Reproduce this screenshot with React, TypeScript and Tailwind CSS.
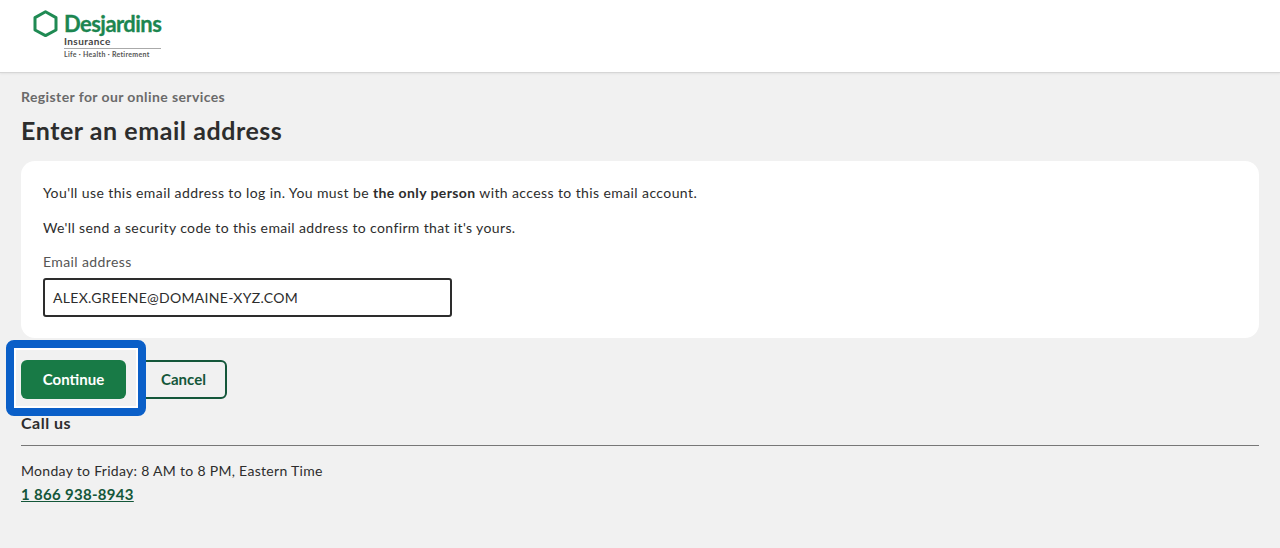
const font = { fontFamily: "Lato, 'Noto Sans', sans-serif" }

function Logo()
{
    return (
        <div className="flex items-start gap-[6px]">
            <svg width="25" height="28" viewBox="0 0 25 28" className="mt-[10px] shrink-0">
                <path d="M12.5 1.8 L23 7.6 V20 L12.5 25.6 L2 20 V7.6 Z" fill="none" stroke="#1f8a53" strokeWidth="3" strokeLinejoin="round" />
            </svg>
            <div className="mt-[11px] w-[97px]">
                <div className="text-[22px] leading-[26px] font-bold text-[#1c8650] tracking-[-0.55px] [-webkit-text-stroke:0.3px_#1c8650] whitespace-nowrap">Desjardins</div>
                <div className="-mt-[1px] text-[10px] leading-[11px] font-bold text-[#444] tracking-[0.4px]">Insurance</div>
                <div className="mt-[1px] border-t border-[#aaa] text-[7px] leading-[11px] font-bold text-[#555] tracking-[0.3px] whitespace-nowrap">Life · Health · Retirement</div>
            </div>
        </div>
    )
}

export default function App()
{
    return (
        <div className="relative h-[548px] w-[1280px] overflow-hidden bg-[#f1f1f1] text-[#2d2d2d]" style={ font }>
            <header className="h-[73px] border-b border-[#d6d6d6] bg-white pl-[33px] shadow-[0_1px_2px_rgba(0,0,0,0.06)]">
                <Logo />
            </header>
            <main className="px-[21px]">
                <p className="mt-[15px] text-[14px] leading-[17px] font-bold text-[#6a6a6a] tracking-[0.4px]">Register for our online services</p>
                <h1 className="mt-[9px] text-[25px] leading-[32px] font-bold text-[#2d2d2d] tracking-[0.55px]">Enter an email address</h1>
                <section className="mt-[15px] h-[177px] w-[1238px] rounded-[14px] bg-white px-[22px] pt-[23px] text-[14px] leading-[18px] tracking-[0.4px]">
                    <p>You'll use this email address to log in. You must be <b>the only person</b> with access to this email account.</p>
                    <p className="mt-[17px] tracking-[0.37px]">We'll send a security code to this email address to confirm that it's yours.</p>
                    <label className="mt-[16px] block text-[#555]">Email address</label>
                    <div className="mt-[7px] flex h-[39px] w-[409px] items-center rounded-[3px] border-2 border-[#2d2d2d] px-[8px] tracking-[0.3px]">ALEX.GREENE@DOMAINE-XYZ.COM</div>
                </section>
                <div className="mt-[22px] flex gap-[14px]">
                    <button className="h-[39px] w-[105px] rounded-[6px] bg-[#187a46] text-[15px] font-bold text-white">Continue</button>
                    <button className="h-[39px] w-[87px] rounded-[6px] border-2 border-[#14573a] text-[15px] font-bold text-[#14573a]">Cancel</button>
                </div>
                <h2 className="mt-[15px] w-[1238px] border-b border-[#777] pb-[13px] text-[16px] leading-[18px] font-bold tracking-[0.5px]">Call us</h2>
                <p className="mt-[16px] text-[14px] leading-[18px] tracking-[0.3px]">Monday to Friday: 8 AM to 8 PM, Eastern Time</p>
                <a className="mt-[4px] block text-[15px] leading-[20px] font-bold text-[#14573a] underline tracking-[0.3px]">1 866 938-8943</a>
            </main>
            <div className="absolute left-[6px] top-[340px] h-[76px] w-[140px] rounded-[8px] border-[8px] border-[#0a5fc8] outline-2 -outline-offset-[10px] outline-white" />
        </div>
    )
}
